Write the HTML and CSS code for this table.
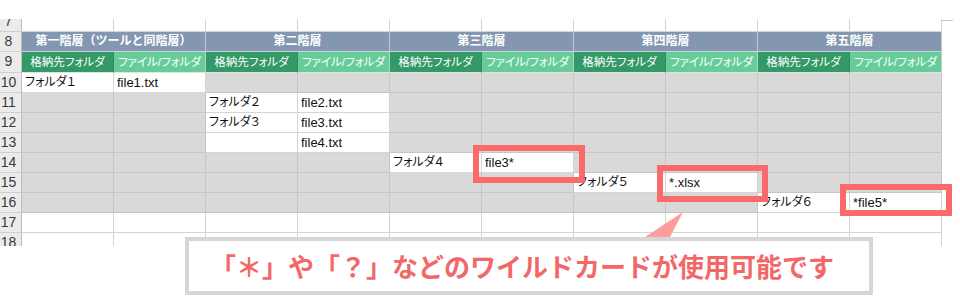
FILE: index.html
```html
<!DOCTYPE html>
<html lang="ja">
<head>
<meta charset="utf-8">
<title>ワイルドカード</title>
<link rel="stylesheet" href="styles.css">
</head>
<body>
<div class="page">
  <div class="sheet">
    <div class="grid">
      <div class="rh">7</div>
      <div class="c w"></div><div class="c w"></div><div class="c w"></div><div class="c w"></div><div class="c w"></div><div class="c w"></div><div class="c w"></div><div class="c w"></div><div class="c w"></div><div class="c w"></div>

      <div class="rh">8</div>
      <div class="h1">第一階層（ツールと同階層）</div>
      <div class="h1">第二階層</div>
      <div class="h1">第三階層</div>
      <div class="h1">第四階層</div>
      <div class="h1">第五階層</div>

      <div class="rh">9</div>
      <div class="g1">格納先フォルダ</div><div class="g2">ファイル/フォルダ</div>
      <div class="g1">格納先フォルダ</div><div class="g2">ファイル/フォルダ</div>
      <div class="g1">格納先フォルダ</div><div class="g2">ファイル/フォルダ</div>
      <div class="g1">格納先フォルダ</div><div class="g2">ファイル/フォルダ</div>
      <div class="g1">格納先フォルダ</div><div class="g2">ファイル/フォルダ</div>

      <div class="rh">10</div>
      <div class="c w jp">フォルダ１</div><div class="c w">file1.txt</div>
      <div class="c"></div><div class="c"></div><div class="c"></div><div class="c"></div><div class="c"></div><div class="c"></div><div class="c"></div><div class="c"></div>

      <div class="rh">11</div>
      <div class="c"></div><div class="c"></div>
      <div class="c w jp">フォルダ２</div><div class="c w">file2.txt</div>
      <div class="c"></div><div class="c"></div><div class="c"></div><div class="c"></div><div class="c"></div><div class="c"></div>

      <div class="rh">12</div>
      <div class="c"></div><div class="c"></div>
      <div class="c w jp">フォルダ３</div><div class="c w">file3.txt</div>
      <div class="c"></div><div class="c"></div><div class="c"></div><div class="c"></div><div class="c"></div><div class="c"></div>

      <div class="rh">13</div>
      <div class="c"></div><div class="c"></div>
      <div class="c w"></div><div class="c w">file4.txt</div>
      <div class="c"></div><div class="c"></div><div class="c"></div><div class="c"></div><div class="c"></div><div class="c"></div>

      <div class="rh">14</div>
      <div class="c"></div><div class="c"></div><div class="c"></div><div class="c"></div>
      <div class="c w jp">フォルダ４</div><div class="c w">file3*</div>
      <div class="c"></div><div class="c"></div><div class="c"></div><div class="c"></div>

      <div class="rh">15</div>
      <div class="c"></div><div class="c"></div><div class="c"></div><div class="c"></div><div class="c"></div><div class="c"></div>
      <div class="c w jp">フォルダ５</div><div class="c w">*.xlsx</div>
      <div class="c"></div><div class="c"></div>

      <div class="rh">16</div>
      <div class="c"></div><div class="c"></div><div class="c"></div><div class="c"></div><div class="c"></div><div class="c"></div><div class="c"></div><div class="c"></div>
      <div class="c w jp">フォルダ６</div><div class="c w">*file5*</div>

      <div class="rh">17</div>
      <div class="c w"></div><div class="c w"></div><div class="c w"></div><div class="c w"></div><div class="c w"></div><div class="c w"></div><div class="c w"></div><div class="c w"></div><div class="c w"></div><div class="c w"></div>

      <div class="rh">18</div>
      <div class="c w"></div><div class="c w"></div><div class="c w"></div><div class="c w"></div><div class="c w"></div><div class="c w"></div><div class="c w"></div><div class="c w"></div><div class="c w"></div><div class="c w"></div>
    </div>
  </div>

  <div class="mark mark1"></div>
  <div class="mark mark2"></div>
  <div class="mark mark3"></div>

  <svg class="tail" width="100" height="60" viewBox="0 0 100 60">
    <polygon points="83,7 7,57 57,57" fill="#ff9d9d"/>
  </svg>

  <div class="callout">「＊」や「？」などのワイルドカードが使用可能です</div>
</div>
</body>
</html>
```

FILE: styles.css
```css
html, body {
  margin: 0;
  padding: 0;
  background: #ffffff;
}

.page {
  position: relative;
  width: 960px;
  height: 303px;
  padding-top: 19px;
  box-sizing: border-box;
  overflow: hidden;
  font-family: "Liberation Sans", "Noto Sans CJK JP", sans-serif;
}

.sheet {
  position: relative;
  height: 227px;
  overflow: hidden;
}

.sheet::after {
  content: "";
  position: absolute;
  left: 942px;
  top: 1px;
  width: 11px;
  height: 1px;
  background: #c8c8c8;
}

.grid {
  margin-top: -7px;
  display: grid;
  grid-template-columns: 22px repeat(10, 92px);
  grid-template-rows: 20px 20px 21px repeat(9, 20px);
}

.grid > div {
  box-sizing: border-box;
  white-space: nowrap;
  overflow: hidden;
}

.rh {
  background: #ebebeb;
  border-right: 1px solid #bdbdbd;
  border-bottom: 1px solid #cfcfcf;
  color: #3a3a3a;
  font-size: 14px;
  line-height: 19px;
  text-align: center;
  padding-right: 4px;
  overflow: visible !important;
}

.h1 {
  grid-column: span 2;
  background: #8497b0;
  color: #ffffff;
  font-weight: bold;
  font-size: 12px;
  line-height: 19px;
  text-align: center;
  border-right: 1px solid #c4c9d2;
  border-bottom: 1px solid #d0d4da;
}

.g1, .g2 {
  color: #ffffff;
  font-size: 11.5px;
  line-height: 20px;
  text-align: center;
  border-bottom: 1px solid #e2e2e2;
  font-feature-settings: "palt";
}

.g1 {
  background: #339966;
  border-right: 1px solid #2f8c5d;
}

.g2 {
  background: #66cc99;
  border-right: 1px solid #c8c8c8;
}

.c {
  background: #d9d9d9;
  border-right: 1px solid #c6c6c6;
  border-bottom: 1px solid #c6c6c6;
  font-size: 13px;
  line-height: 19px;
  padding-left: 3px;
  color: #111111;
}

.c.jp {
  font-size: 12px;
  font-feature-settings: "palt";
}

.c.w {
  background: #ffffff;
  border-right-color: #d4d4d4;
  border-bottom-color: #d4d4d4;
}

.mark {
  position: absolute;
  border: 6px solid #fb6a6a;
  box-sizing: border-box;
}

.mark1 {
  left: 473px;
  top: 145px;
  width: 112px;
  height: 38px;
}

.mark2 {
  left: 657px;
  top: 165px;
  width: 111px;
  height: 37px;
}

.mark3 {
  left: 840px;
  top: 184px;
  width: 112px;
  height: 32px;
}

.tail {
  position: absolute;
  left: 600px;
  top: 205px;
}

.callout {
  position: absolute;
  left: 185px;
  top: 237px;
  width: 688px;
  height: 58px;
  box-sizing: border-box;
  border: 4px solid #d6d6d6;
  background: #ffffff;
  color: #f26868;
  font-family: "Noto Sans CJK JP", sans-serif;
  font-weight: bold;
  font-size: 26px;
  line-height: 50px;
  padding-left: 21px;
  white-space: nowrap;
}
```
